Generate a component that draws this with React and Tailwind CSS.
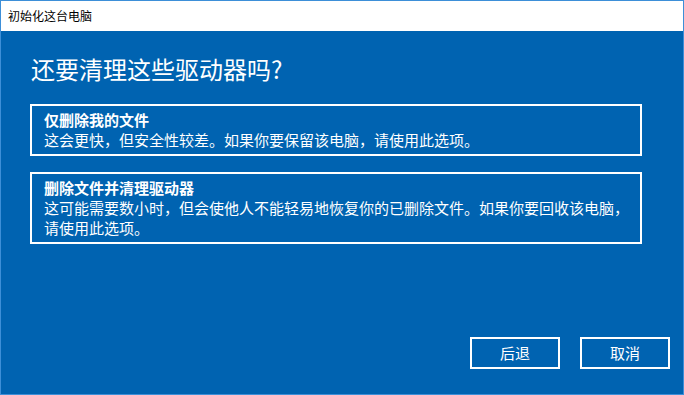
export default function App() {
  const font = { fontFamily: '"Noto Sans CJK SC", "Noto Sans", sans-serif' };
  return (
    <div
      className="w-[684px] h-[395px] border border-[#3d8fd8] flex flex-col overflow-hidden"
      style={font}
    >
      <div className="h-[30px] shrink-0 bg-white flex items-center px-[7px] text-[12px] leading-[16px] text-black">
        初始化这台电脑
      </div>
      <div className="flex-1 bg-[#0063b1] flex flex-col text-white">
        <div className="pl-[29px] pt-[22px]">
          <h1 className="pl-[1px] text-[24px] leading-[32px] font-normal">还要清理这些驱动器吗?</h1>
          <div className="mt-[19px] w-[612px] border-2 border-white pl-[12px] pr-[4px] py-[4px] text-[15px] leading-[20px] whitespace-nowrap">
            <div className="font-bold">仅删除我的文件</div>
            <div>这会更快，但安全性较差。如果你要保留该电脑，请使用此选项。</div>
          </div>
          <div className="mt-[16px] w-[612px] border-2 border-white pl-[12px] pr-[4px] py-[4px] text-[15px] leading-[20px] whitespace-nowrap">
            <div className="font-bold">删除文件并清理驱动器</div>
            <div>这可能需要数小时，但会使他人不能轻易地恢复你的已删除文件。如果你要回收该电脑，</div>
            <div>请使用此选项。</div>
          </div>
        </div>
        <div className="mt-auto flex justify-end gap-[20px] pr-[13px] pb-[25px]">
          <button className="w-[90px] h-[32px] border-2 border-white text-[15px] leading-[20px] text-white bg-transparent">
            后退
          </button>
          <button className="w-[90px] h-[32px] border-2 border-white text-[15px] leading-[20px] text-white bg-transparent">
            取消
          </button>
        </div>
      </div>
    </div>
  );
}
